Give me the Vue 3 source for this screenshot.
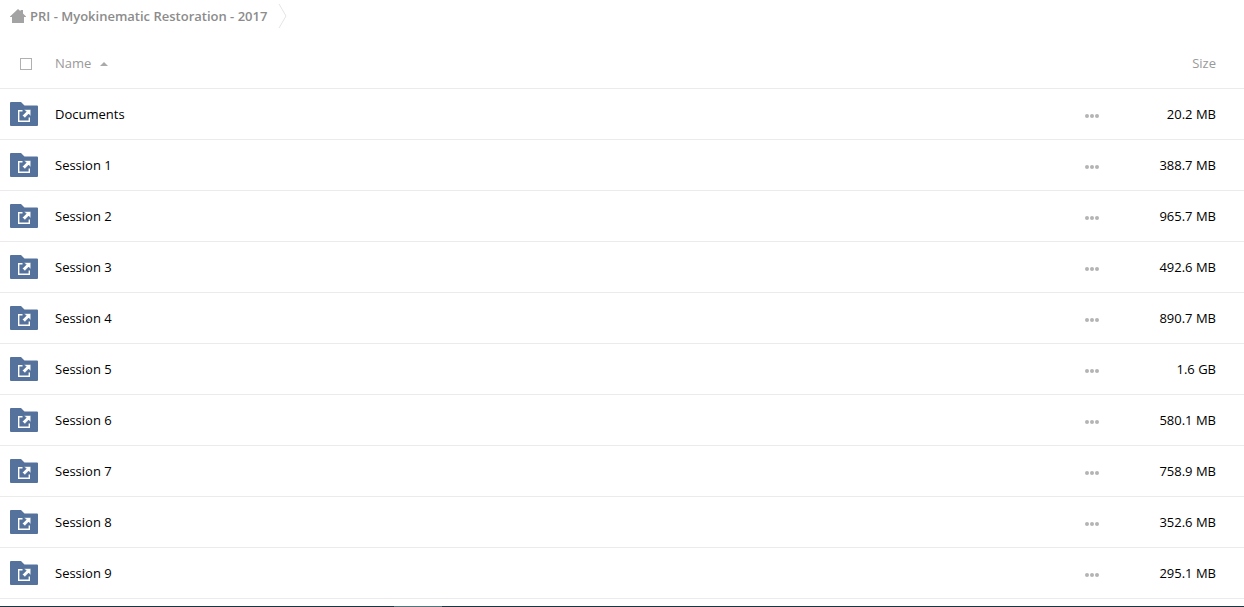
<script setup>
import { ref } from 'vue'

const allSelected = ref(false)
const items = [
  { name: 'Documents', size: '20.2 MB' },
  { name: 'Session 1', size: '388.7 MB' },
  { name: 'Session 2', size: '965.7 MB' },
  { name: 'Session 3', size: '492.6 MB' },
  { name: 'Session 4', size: '890.7 MB' },
  { name: 'Session 5', size: '1.6 GB' },
  { name: 'Session 6', size: '580.1 MB' },
  { name: 'Session 7', size: '758.9 MB' },
  { name: 'Session 8', size: '352.6 MB' },
  { name: 'Session 9', size: '295.1 MB' },
]
</script>

<template>
  <div class="page">
    <nav class="crumbs" aria-label="Breadcrumb">
      <a class="crumb" href="#">
        <svg class="home" width="16" height="14" viewBox="0 0 16 14" aria-hidden="true">
          <path d="M8 0 L10.5 2.2 V1 H13 V4.4 L16 7.4 V8 H14 V14 H2 V8 H0 V7.4 Z" />
        </svg>
        <span>PRI - Myokinematic Restoration - 2017</span>
      </a>
      <svg class="sep" width="10" height="24" viewBox="0 0 10 24" aria-hidden="true">
        <path d="M1 0 L8 12 L1 24" />
      </svg>
    </nav>

    <table class="files">
      <thead>
        <tr>
          <th class="icon-col check-col">
            <input v-model="allSelected" class="check" type="checkbox" aria-label="Select all" />
          </th>
          <th class="name-col">
            <button class="sort" type="button">
              <span>Name</span>
              <svg width="8" height="6" viewBox="0 0 8 6" aria-hidden="true"><path d="M0 6 L4 2 L8 6 Z" /></svg>
            </button>
          </th>
          <th class="menu-col"></th>
          <th class="size-col"><button class="sort" type="button">Size</button></th>
        </tr>
      </thead>
      <tbody>
        <tr v-for="item in items" :key="item.name">
          <td class="icon-col">
            <svg class="folder" width="28" height="24" viewBox="0 0 28 24" aria-hidden="true">
              <path class="folder-body" d="M0 1 Q0 0 1 0 H11 L14.5 3.5 H27 Q28 3.5 28 4.5 V23 Q28 24 27 24 H1 Q0 24 0 23 Z" />
              <path class="folder-box" d="M12.5 8.7 H8.7 V19.3 H19.3 V15.5" />
              <path class="folder-arrow" d="M14 7.5 H20.8 V14.3 L18.6 12.1 L14.8 15.9 L12.4 13.5 L16.2 9.7 Z" />
            </svg>
          </td>
          <td class="name-col"><a class="name" href="#">{{ item.name }}</a></td>
          <td class="menu-col">
            <button class="more" type="button" :aria-label="`Actions for ${item.name}`">
              <svg width="14" height="4" viewBox="0 0 14 4" aria-hidden="true">
                <circle cx="2" cy="2" r="2" />
                <circle cx="7" cy="2" r="2" />
                <circle cx="12" cy="2" r="2" />
              </svg>
            </button>
          </td>
          <td class="size-col">{{ item.size }}</td>
        </tr>
      </tbody>
    </table>

    <footer class="bar"><span class="bar-active"></span></footer>
  </div>
</template>

<style>
body {
  margin: 0;
  background: #fff;
}
</style>

<style scoped>
.page {
  display: flex;
  flex-direction: column;
  min-height: 100vh;
  font-family: "Open Sans", "Noto Sans", sans-serif;
  font-size: 13px;
  line-height: 18px;
  color: #000;
}
.crumbs {
  display: flex;
  align-items: center;
  gap: 11px;
  height: 32px;
  margin-bottom: 6px;
  padding-left: 10px;
}
.crumb {
  display: flex;
  align-items: center;
  gap: 4px;
  color: #8c8c8c;
  font-weight: 600;
  text-decoration: none;
}
.home {
  fill: #a3a3a3;
}
.sep {
  fill: none;
  stroke: #e4e4e4;
  stroke-width: 1;
}
.files {
  width: 100%;
  border-collapse: separate;
  border-spacing: 0;
  table-layout: fixed;
}
th,
td {
  box-sizing: border-box;
  height: 51px;
  padding: 0;
  border-bottom: 1px solid #ebebeb;
  font-weight: 400;
  text-align: left;
  vertical-align: middle;
}
.icon-col {
  width: 55px;
  padding-left: 10px;
}
.check-col {
  padding-top: 2px;
  padding-left: 20px;
}
.menu-col {
  width: 59px;
}
.size-col {
  width: 100px;
  padding-right: 28px;
  text-align: right;
}
.check {
  display: block;
  appearance: none;
  box-sizing: border-box;
  width: 12px;
  height: 12px;
  margin: 0;
  border: 1px solid #b0b0b0;
  background: #fff;
}
.check:checked {
  background: #54729b;
}
.sort {
  display: inline-flex;
  align-items: center;
  gap: 9px;
  padding: 0;
  border: 0;
  background: none;
  font: inherit;
  color: #999;
  cursor: pointer;
}
.sort svg {
  fill: #aaa;
}
.folder {
  display: block;
}
.folder-body {
  fill: #54729b;
}
.folder-box {
  fill: none;
  stroke: #fff;
  stroke-width: 1.4;
}
.folder-arrow {
  fill: #fff;
  stroke: #54729b;
  stroke-width: 0.6;
}
.name {
  color: #000;
  text-decoration: none;
}
.more {
  display: block;
  padding: 10px 0 7px;
  border: 0;
  background: none;
  cursor: pointer;
}
.more svg {
  display: block;
  fill: #b4b4b4;
}
.bar {
  height: 1px;
  margin-top: auto;
  padding-left: 394px;
  background: #1d3540;
}
.bar-active {
  display: block;
  width: 48px;
  height: 1px;
  background: #55737b;
}
</style>
